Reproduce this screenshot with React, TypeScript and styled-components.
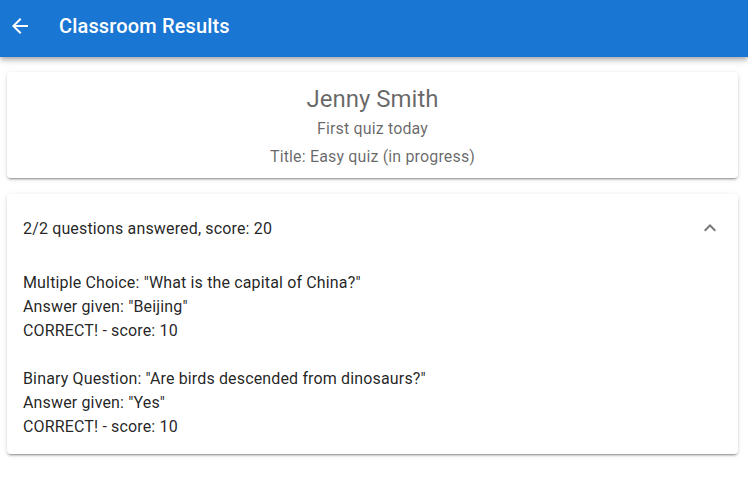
import React from "react";
import styled, { createGlobalStyle } from "styled-components";

const Global = createGlobalStyle`
  html, body { margin: 0; padding: 0; background: #fff; }
  body { font-family: Roboto, "Liberation Sans", Arial, sans-serif; -webkit-font-smoothing: antialiased; }
  * { box-sizing: border-box; }
`;

const AppBar = styled.header`
  height: 57px;
  background: #1976d2;
  color: #fff;
  display: flex;
  align-items: center;
  padding: 0 16px 5px 8px;
  box-shadow: 0px 2px 4px -1px rgba(0,0,0,0.2), 0px 4px 5px 0px rgba(0,0,0,0.14), 0px 1px 10px 0px rgba(0,0,0,0.12);
  position: relative;
  z-index: 2;
`;

const IconButton = styled.button`
  width: 24px;
  height: 24px;
  padding: 0;
  margin-right: 27px;
  border: none;
  background: transparent;
  color: inherit;
  display: flex;
  align-items: center;
  justify-content: center;
  cursor: pointer;
`;

const Title = styled.h1`
  margin: 0;
  font-size: 20px;
  font-weight: 500;
  line-height: 32px;
  letter-spacing: 0.15px;
`;

const Main = styled.main`
  padding: 15px 10px 16px 7px;
  display: flex;
  flex-direction: column;
  gap: 16px;
`;

const Card = styled.section`
  background: #fff;
  border-radius: 4px;
  box-shadow: 0px 3px 1px -2px rgba(0,0,0,0.2), 0px 2px 2px 0px rgba(0,0,0,0.14), 0px 1px 5px 0px rgba(0,0,0,0.12);
`;

const ProfileCard = styled(Card)`
  padding: 11px 16px 6px;
  display: flex;
  flex-direction: column;
  align-items: center;
  color: rgba(0,0,0,0.6);
`;

const Name = styled.div`
  font-size: 24px;
  line-height: 32px;
  font-weight: 400;
`;

const SubLine = styled.div<{ $h: number }>`
  font-size: 16px;
  line-height: ${(p) => p.$h}px;
  letter-spacing: 0.15px;
`;

const Summary = styled.div`
  height: 68px;
  padding: 0 16px;
  display: flex;
  align-items: center;
  justify-content: space-between;
  font-size: 16px;
  color: rgba(0,0,0,0.87);
  letter-spacing: 0.15px;
`;

const ExpandIcon = styled.span`
  display: flex;
  color: rgba(0,0,0,0.54);
`;

const Details = styled.div`
  padding: 9px 16px 15px;
  display: flex;
  flex-direction: column;
  gap: 24px;
`;

const Result = styled.div`
  font-size: 16px;
  line-height: 24px;
  color: rgba(0,0,0,0.87);
  letter-spacing: 0.15px;
`;

const results = [
  { q: 'Multiple Choice: "What is the capital of China?"', a: 'Answer given: "Beijing"', s: "CORRECT! - score: 10" },
  { q: 'Binary Question: "Are birds descended from dinosaurs?"', a: 'Answer given: "Yes"', s: "CORRECT! - score: 10" },
];

export default function App() {
  return (
    <>
      <Global />
      <AppBar>
        <IconButton aria-label="back">
          <svg width="24" height="24" viewBox="0 0 24 24" fill="currentColor">
            <path d="M20 11H7.83l5.59-5.59L12 4l-8 8 8 8 1.41-1.41L7.83 13H20v-2z" />
          </svg>
        </IconButton>
        <Title>Classroom Results</Title>
      </AppBar>
      <Main>
        <ProfileCard>
          <Name>Jenny Smith</Name>
          <SubLine $h={27}>First quiz today</SubLine>
          <SubLine $h={30}>Title: Easy quiz (in progress)</SubLine>
        </ProfileCard>
        <Card>
          <Summary>
            <span>2/2 questions answered, score: 20</span>
            <ExpandIcon>
              <svg width="24" height="24" viewBox="0 0 24 24" fill="currentColor">
                <path d="M12 8l-6 6 1.41 1.41L12 10.83l4.59 4.58L18 14z" />
              </svg>
            </ExpandIcon>
          </Summary>
          <Details>
            {results.map((r, i) => (
              <Result key={i}>
                <div>{r.q}</div>
                <div>{r.a}</div>
                <div>{r.s}</div>
              </Result>
            ))}
          </Details>
        </Card>
      </Main>
    </>
  );
}
